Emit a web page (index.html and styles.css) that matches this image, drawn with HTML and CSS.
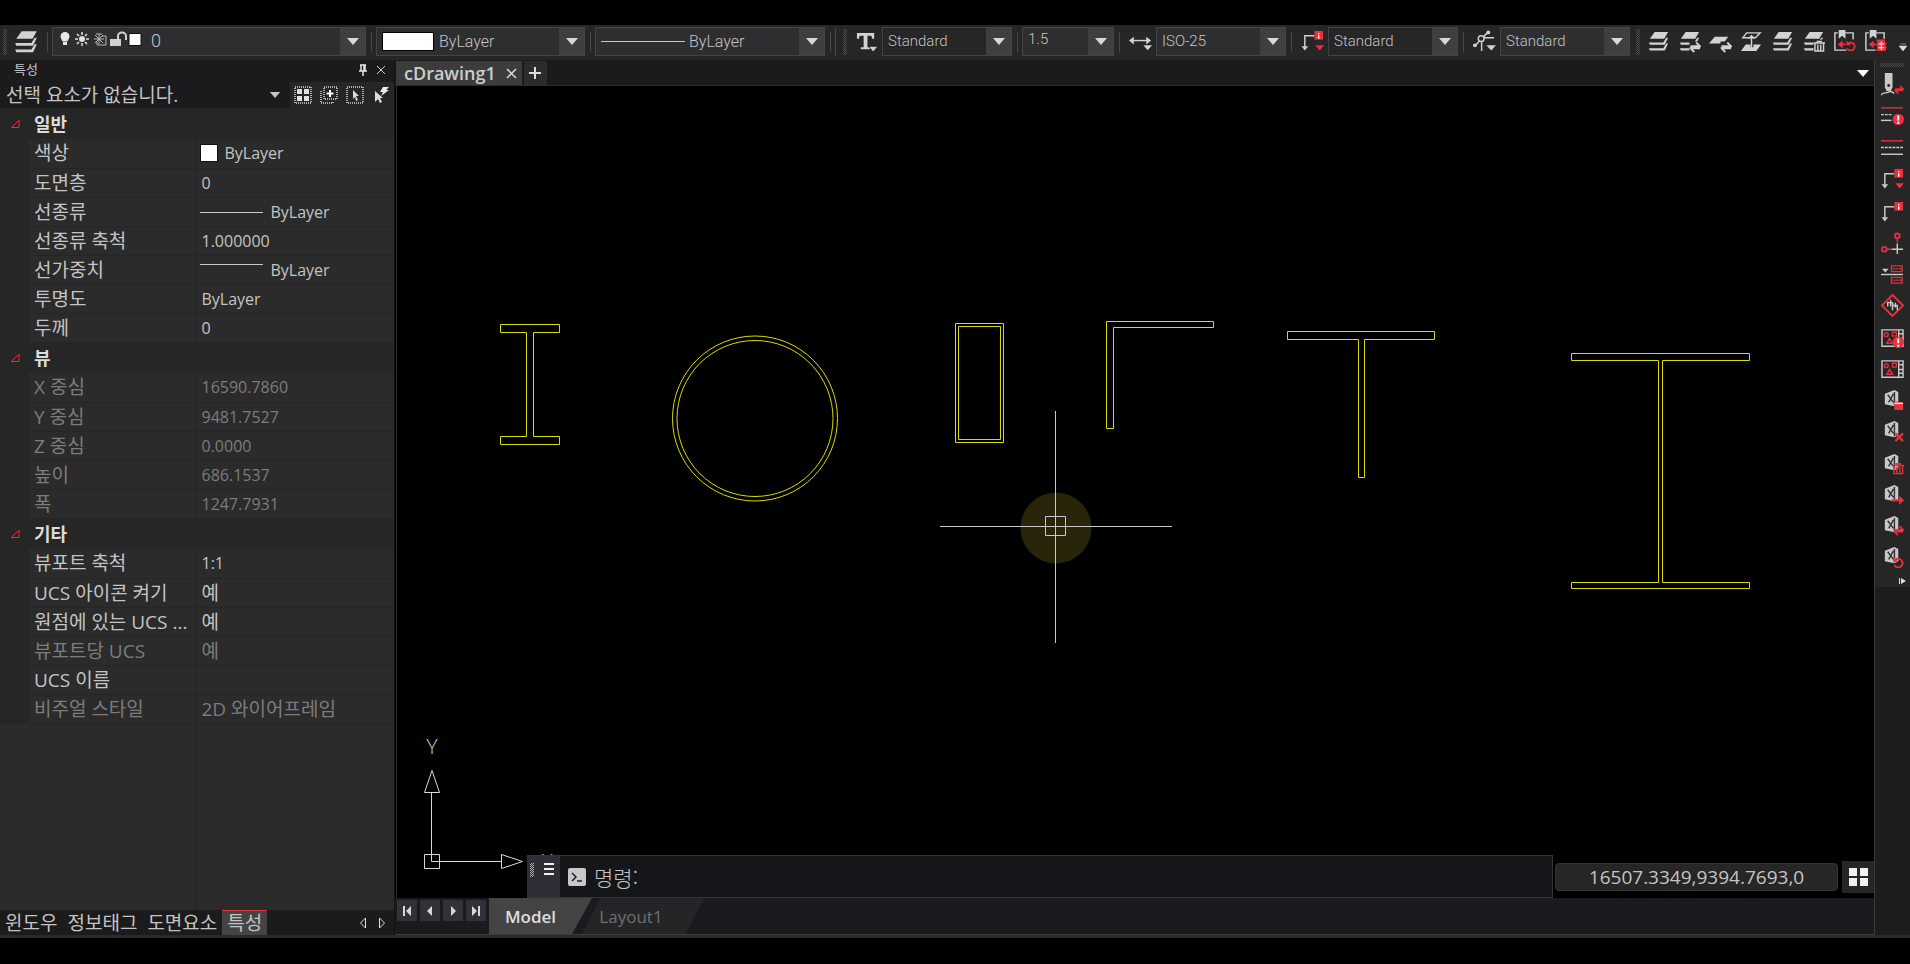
FILE: index.html
```
<!DOCTYPE html>
<html lang="ko">
<head>
<meta charset="UTF-8" />
<meta name="viewport" content="width=device-width, initial-scale=1" />
<title>cDrawing1</title>
<link rel="stylesheet" href="styles.css">
</head>
<body>

<!-- shared icons -->
<svg class="defs" aria-hidden="true">
  <symbol id="layers" viewBox="0 0 24 24">
    <path d="M8 2h14l-4 7H3zM2 13h15l3-5h2l-3.500 7.500H3zM2 19h15l3-5h2l-3.500 7.500H3z" fill="currentColor"/>
  </symbol>
  <symbol id="swap" viewBox="0 0 12 12">
    <path d="M1 5h10L7 1M11 7H1l4 4" fill="none" stroke="currentColor" stroke-width="2"/>
  </symbol>
  <symbol id="trash" viewBox="0 0 12 12">
    <path d="M0 2.5h12M4 2V.7h4V2M1.5 3v8h9V3M4.5 4v6M7.5 4v6" fill="none" stroke="currentColor" stroke-width="1.5"/>
  </symbol>
  <symbol id="undo" viewBox="0 0 12 12">
    <path d="M3 3.5A4.5 4.5 0 1 1 2 9" fill="none" stroke="currentColor" stroke-width="2"/>
    <path d="M1 5.5V0l5 5.5z" fill="currentColor"/>
  </symbol>
  <symbol id="alert" viewBox="0 0 12 12">
    <circle cx="6" cy="6" r="6" class="red-fill"/>
    <path d="M6 2v5M6 8.5v2" stroke="#fff" stroke-width="2"/>
  </symbol>
  <symbol id="leader" viewBox="0 0 24 24">
    <path d="M4 18V6h10" fill="none" stroke="currentColor" stroke-width="1.5"/>
    <path d="M.5 17h7L4 21.5z" fill="currentColor"/>
    <path d="M14 1h9v9h-9z" class="red-fill"/>
    <path d="M18.5 3v1.5M18.5 5.5V9" stroke="#fff" stroke-width="1.5"/>
  </symbol>
  <symbol id="block" viewBox="0 0 24 24">
    <path d="M4 5l10-4 4 2v13l-4 2-10-2z" fill="currentColor"/>
    <path d="M7 6l6 8M13 5l-5 9M14 3v14" fill="none" stroke="#333" stroke-width="1.5"/>
  </symbol>
  <symbol id="shapes" viewBox="0 0 24 24">
    <path d="M1 3h22v17H1zM18.5 3v17M19 7h4M19 12h4M19 16h4" fill="none" stroke="currentColor" stroke-width="1.5"/>
    <path d="M12 5.5h4v4h-4zM9 12l3 5H6z" fill="none" class="red-line" stroke-width="1.5"/>
    <circle cx="5.5" cy="8" r="2" fill="none" class="red-line" stroke-width="1.5"/>
  </symbol>
  <symbol id="down" viewBox="0 0 12 7">
    <path d="M0 0h12L6 7z" fill="currentColor"/>
  </symbol>
</svg>

<div class="app">

  <header class="toolbar">
    <span class="grip"></span>
    <button class="tool" title="도면층"><svg class="icon-lg"><use href="#layers"/></svg></button>
    <span class="sep"></span>
    <div class="combo w-layer">
      <select class="pad-layer" aria-label="도면층"><option>0</option></select>
      <svg class="deco" width="84" height="20" viewBox="0 0 84 20">
        <path d="M6 1a4.5 4.5 0 0 1 4.5 4.5c0 2-1.5 3-2 5h-5c-.5-2-2-3-2-5A4.5 4.5 0 0 1 6 1zM4 11h4v3H4z" fill="#e6e6e6"/>
        <circle cx="23" cy="8" r="3" fill="#e0e0e0"/>
        <path d="M23 1v3M23 12v3M16 8h3M27 8h3M18 3l2 2M28 3l-2 2M18 13l2-2M28 13l-2-2" stroke="#e0e0e0" stroke-width="1.5"/>
        <path d="M35 8h10M40 3v10M36 4l8 8M44 4l-8 8M37 3h6M43 5h4v9h-9v-3" fill="none" stroke="#b8b8b8"/>
        <path d="M51 8h11v7H51z" fill="#d0d0d0"/>
        <path d="M59 8V5a4 3.5 0 0 1 8 0v4" fill="none" stroke="#d0d0d0" stroke-width="2"/>
        <path d="M70 2.5h12v12H70z" fill="#fff" stroke="#111"/>
      </svg>
      <span class="drop"><svg><use href="#down"/></svg></span>
    </div>
    <span class="sep"></span>
    <div class="combo w-color">
      <select class="pad-color" aria-label="색상"><option>ByLayer</option></select>
      <span class="deco swatch"></span>
      <span class="drop"><svg><use href="#down"/></svg></span>
    </div>
    <span class="sep"></span>
    <div class="combo w-line">
      <select class="pad-line" aria-label="선종류"><option>ByLayer</option></select>
      <span class="deco rule"></span>
      <span class="drop"><svg><use href="#down"/></svg></span>
    </div>
    <span class="sep"></span>
    <span class="sep tight"></span>
    <span class="grip"></span>
    <button class="tool" title="문자 스타일"><svg class="icon" viewBox="0 0 24 24">
      <path d="M2 3h18v6h-2l-1-3h-4v12h3v2H6v-2h3V6H5L4 9H2z" fill="currentColor"/>
      <path d="M14 17h10l-5 6z" fill="currentColor" stroke="#262626"/>
    </svg></button>
    <div class="combo w-style">
      <select class="dark" aria-label="문자 스타일"><option>Standard</option></select>
      <span class="drop"><svg><use href="#down"/></svg></span>
    </div>
    <span class="sep"></span>
    <div class="combo w-size">
      <select class="high" aria-label="문자 높이"><option>1.5</option></select>
      <span class="drop"><svg><use href="#down"/></svg></span>
    </div>
    <span class="sep"></span>
    <button class="tool" title="치수 스타일"><svg class="icon" viewBox="0 0 24 24">
      <path d="M3 11h18" stroke="currentColor" stroke-width="1.5"/>
      <path d="M0 11l5-4v8zM23 11l-5-4v8zM15 16h9l-4.500 5z" fill="currentColor"/>
    </svg></button>
    <div class="combo w-style">
      <select aria-label="치수 스타일"><option>ISO-25</option></select>
      <span class="drop"><svg><use href="#down"/></svg></span>
    </div>
    <span class="sep"></span>
    <button class="tool" title="다중 지시선 스타일"><svg class="icon" viewBox="0 0 24 24">
      <use href="#leader"/><path d="M15 16h9l-4.500 5.500z" class="red-fill"/>
    </svg></button>
    <div class="combo w-style">
      <select class="dark" aria-label="다중 지시선 스타일"><option>Standard</option></select>
      <span class="drop"><svg><use href="#down"/></svg></span>
    </div>
    <span class="sep"></span>
    <button class="tool" title="점 스타일"><svg class="icon" viewBox="0 0 24 24">
      <path d="M2 17l6-7 7-7M9 9v13M11 8h11" fill="none" stroke="currentColor" stroke-width="1.5"/>
      <circle cx="8.5" cy="9" r="3" fill="#262626" stroke="currentColor" stroke-width="1.5"/>
      <circle cx="16" cy="2.5" r="2" fill="currentColor"/><circle cx="2" cy="16" r="2" fill="currentColor"/>
      <path d="M14 16h10l-5 5.500z" fill="currentColor"/>
    </svg></button>
    <div class="combo w-style">
      <select aria-label="점 스타일"><option>Standard</option></select>
      <span class="drop"><svg><use href="#down"/></svg></span>
    </div>
    <div class="layer-tools">
      <span class="grip"></span>
      <button class="tool" title="도면층 특성"><svg class="icon"><use href="#layers"/></svg></button>
      <button class="tool" title="도면층 전환"><svg class="icon" viewBox="0 0 24 24"><use href="#layers" width="24" height="24"/><path d="M12 12h12v12H12z" fill="#262626"/><use href="#swap" x="12" y="12" width="12" height="12"/></svg></button>
      <button class="tool" title="현재로 변경"><svg class="icon" viewBox="0 0 24 24"><path d="M6 7h14l-5 7H0z" fill="currentColor"/><path d="M12 12h12v12H12z" fill="#262626"/><use href="#swap" x="12" y="12" width="12" height="12"/></svg></button>
      <button class="tool" title="도면층 이동"><svg class="icon" viewBox="0 0 24 24"><path d="M7 3h14l-5 5H3zM12 6v13M9 9l3-3 3 3" fill="none" stroke="currentColor" stroke-width="1.5"/><path d="M6 15h5v3h3v-3h8l-5 7H1z" fill="currentColor"/></svg></button>
      <button class="tool" title="도면층 일치"><svg class="icon"><use href="#layers"/></svg></button>
      <button class="tool" title="도면층 삭제"><svg class="icon" viewBox="0 0 24 24"><use href="#layers" width="24" height="24"/><path d="M12 10h12v14H12z" fill="#262626"/><use href="#trash" x="12" y="11" width="12" height="12"/></svg></button>
      <button class="tool" title="도면층 복원"><svg class="icon" viewBox="0 0 24 24">
        <path d="M5 3H2v18h12M13 3h8v7" fill="none" stroke="currentColor" stroke-width="1.5"/><path d="M6 0h7v9l-3.500-3L6 9z" fill="currentColor"/>
        <path d="M5 15l5-4v3h3v2h-3v3z" class="red-fill"/><use href="#undo" class="red" x="13" y="11" width="11" height="11"/></svg></button>
      <button class="tool" title="도면층 상태"><svg class="icon" viewBox="0 0 24 24">
        <path d="M5 3H2v18h10M13 3h8v6" fill="none" stroke="currentColor" stroke-width="1.5"/><path d="M6 0h7v9l-3.500-3L6 9z" fill="currentColor"/>
        <path d="M5 15l5-4v3h3v2h-3v3zM13 10h9v3l2 1-2 2 2 2-2 4h-9l1-4-1-2 1-2z" class="red-fill"/><path d="M18 12v9M15 14.500h6M15 18.500h6" stroke="#fff"/></svg></button>
    </div>
    <button class="overflow" title="더 보기"><svg width="8" height="9" viewBox="0 0 8 9"><path d="M1 1h6M0 3h8L4 8z" fill="#ddd" stroke="#ddd" stroke-width=".5"/></svg></button>
  </header>

  <div class="main">

    <aside class="panel">
      <div class="panel-title">
        <h2>특성</h2>
        <button title="고정"><svg width="10" height="12" viewBox="0 0 10 12"><path d="M2 1h6M3 1v6M7 1v6M6 1v6M1 7h8M5 7v5" fill="none" stroke="#e8e8e8" stroke-width="1.5"/></svg></button>
        <button title="닫기"><svg width="10" height="10" viewBox="0 0 10 10"><path d="M1 1l8 8M9 1L1 9" stroke="#ccc"/></svg></button>
      </div>
      <div class="selection">
        <div class="pick">
          <select aria-label="선택 요소"><option>선택 요소가 없습니다.</option></select>
          <svg class="pick-arrow"><use href="#down"/></svg>
        </div>
        <button title="모두 선택"><svg width="18" height="18" viewBox="0 0 18 18"><path d="M1 1h16v16H1z" fill="none" stroke="#d8d8d8" stroke-width="1.5" stroke-dasharray="1 1"/><path d="M3 3h5v5H3zM10 3h5v5h-5zM3 10h5v5H3zM10 10h5v5h-5z" fill="#e0e0e0"/></svg></button>
        <button title="선택 추가"><svg width="18" height="18" viewBox="0 0 18 18"><path d="M1 5v12h12v-2M4 1h13v12H4z" fill="none" stroke="#d8d8d8" stroke-width="1.5" stroke-dasharray="1 1"/><path d="M10 4v7M6.500 7.500h7" stroke="#fff" stroke-width="2"/></svg></button>
        <button title="객체 선택"><svg width="18" height="18" viewBox="0 0 18 18"><path d="M1 1h16v16H1z" fill="none" stroke="#d8d8d8" stroke-width="1.5" stroke-dasharray="1 1"/><path d="M7 4l6 6h-3l2 4-2 1-1-4-2 2z" fill="#ddd"/></svg></button>
        <button title="빠른 선택"><svg width="18" height="18" viewBox="0 0 18 18"><path d="M3 5l8 7H8l2 4-2 1-2-4-3 3z" fill="#ddd"/><path d="M11 1h6l-3 3h3l-8 6 2-4H8z" fill="#eee"/></svg></button>
      </div>

      <table class="props">
        <colgroup><col class="c-gutter"><col class="c-name"><col></colgroup>
        <tbody>
          <tr class="group"><td><svg class="mark" viewBox="0 0 10 10"><path d="M1.500 8.500h7.500V1z"/></svg></td><th colspan="2">일반</th></tr>
          <tr><td></td><th>색상</th><td><span class="chip"></span>ByLayer</td></tr>
          <tr><td></td><th>도면층</th><td>0</td></tr>
          <tr><td></td><th>선종류</th><td><span class="dash"></span>ByLayer</td></tr>
          <tr><td></td><th>선종류 축척</th><td>1.000000</td></tr>
          <tr><td></td><th>선가중치</th><td><span class="dash up"></span>ByLayer</td></tr>
          <tr><td></td><th>투명도</th><td>ByLayer</td></tr>
          <tr><td></td><th>두께</th><td>0</td></tr>
        </tbody>
        <tbody>
          <tr class="group"><td><svg class="mark" viewBox="0 0 10 10"><path d="M1.500 8.500h7.500V1z"/></svg></td><th colspan="2">뷰</th></tr>
          <tr class="off"><td></td><th>X 중심</th><td>16590.7860</td></tr>
          <tr class="off"><td></td><th>Y 중심</th><td>9481.7527</td></tr>
          <tr class="off"><td></td><th>Z 중심</th><td>0.0000</td></tr>
          <tr class="off"><td></td><th>높이</th><td>686.1537</td></tr>
          <tr class="off"><td></td><th>폭</th><td>1247.7931</td></tr>
        </tbody>
        <tbody>
          <tr class="group"><td><svg class="mark" viewBox="0 0 10 10"><path d="M1.500 8.500h7.500V1z"/></svg></td><th colspan="2">기타</th></tr>
          <tr><td></td><th>뷰포트 축척</th><td>1:1</td></tr>
          <tr><td></td><th>UCS 아이콘 켜기</th><td class="ko">예</td></tr>
          <tr><td></td><th>원점에 있는 UCS ...</th><td class="ko">예</td></tr>
          <tr class="off"><td></td><th>뷰포트당 UCS</th><td class="ko">예</td></tr>
          <tr><td></td><th>UCS 이름</th><td></td></tr>
          <tr class="off"><td></td><th>비주얼 스타일</th><td class="ko">2D 와이어프레임</td></tr>
        </tbody>
      </table>
      <div class="props-rest"></div>

      <nav class="panel-tabs">
        <button>윈도우</button>
        <button>정보태그</button>
        <button>도면요소</button>
        <button class="active">특성</button>
        <span class="spacer"></span>
        <button class="step" title="이전"><svg width="8" height="12" viewBox="0 0 8 12"><path d="M6.500 1v10L1.500 6z" fill="none" stroke="#ddd"/></svg></button>
        <button class="step" title="다음"><svg width="8" height="12" viewBox="0 0 8 12"><path d="M1.500 1v10l5-5z" fill="none" stroke="#ddd"/></svg></button>
      </nav>
    </aside>

    <section class="work">
      <div class="file-tabs">
        <div class="file-tab">
          <a href="#drawing">cDrawing1</a>
          <button title="닫기"><svg width="11" height="11" viewBox="0 0 11 11"><path d="M1 1l9 9M10 1l-9 9" stroke="#ddd" stroke-width="1.5"/></svg></button>
        </div>
        <button class="new-tab" title="새 도면"><svg width="12" height="12" viewBox="0 0 12 12"><path d="M6 0v12M0 6h12" stroke="#ddd" stroke-width="2"/></svg></button>
        <span class="spacer"></span>
        <button class="tab-list" title="도면 목록"><svg width="12" height="7"><use href="#down"/></svg></button>
      </div>

      <div class="canvas" id="drawing">
        <svg class="sheet" viewBox="397 86 1477 812" preserveAspectRatio="xMinYMin meet">
          <circle cx="1056" cy="528" r="35.500" fill="#28250a"/>
          <g class="shape">
            <path d="M500.500 324.500h59v8h-26v104h26v8h-59v-8h26v-104h-26z"/>
            <circle cx="755" cy="418.500" r="82.500"/>
            <circle cx="755" cy="418.500" r="78"/>
            <path d="M955.500 323.500h48v119h-48zM958.500 326.500h42v113h-42z"/>
            <path d="M1106.500 321.500h107v6h-100v101h-7z"/>
            <path d="M1287.500 331.500h147v8h-70v138h-6v-138h-71z"/>
            <path d="M1571.500 353.500h178v7h-87v222h87v6h-178v-6h87v-222h-87z"/>
          </g>
          <g class="cross">
            <path d="M940 526.500h232M1055.500 411v232"/>
            <path d="M1045.500 516.500h20v19h-20z"/>
          </g>
          <g class="ucs">
            <path d="M424.500 854.500h15v14h-15zM431.500 861.500v-69M431.500 861.500h70"/>
            <path d="M424.500 792.500h15l-7.500-22zM501.500 854.500v14l21-7z"/>
            <text x="432" y="754">Y</text>
            <text x="547" y="869">X</text>
          </g>
        </svg>

        <div class="command-row">
          <div class="command">
            <div class="command-grip">
              <span class="grip"></span>
              <svg width="10" height="12" viewBox="0 0 10 12"><path d="M0 1h10M0 6h10M0 11h10" stroke="#f0f0f0" stroke-width="2"/></svg>
            </div>
            <svg class="prompt" width="18" height="18" viewBox="0 0 18 18"><rect width="18" height="18" rx="2" fill="#c8c8c8"/><path d="M4 5l4 4-4 4M9 13h5" fill="none" stroke="#222" stroke-width="1.5"/></svg>
            <label for="cmd">명령:</label>
            <input id="cmd" type="text" autocomplete="off">
          </div>
          <output class="coords">16507.3349,9394.7693,0</output>
          <button class="grid-btn" title="보기"><svg width="19" height="18" viewBox="0 0 19 18"><path d="M0 0h8v8H0zM11 0h8v8h-8zM0 10h8v8H0zM11 10h8v8h-8z" fill="#f0f0f0"/></svg></button>
        </div>
      </div>

      <div class="sheets">
        <div class="sheet-nav">
          <button title="처음"><svg width="10" height="10" viewBox="0 0 10 10"><path d="M1 0h2v10H1zM9 0v10L4 5z"/></svg></button>
          <button title="이전"><svg width="10" height="10" viewBox="0 0 10 10"><path d="M7 0v10L2 5z"/></svg></button>
          <button title="다음"><svg width="10" height="10" viewBox="0 0 10 10"><path d="M3 0v10l5-5z"/></svg></button>
          <button title="마지막"><svg width="10" height="10" viewBox="0 0 10 10"><path d="M1 0v10l5-5zM7 0h2v10H7z"/></svg></button>
        </div>
        <button class="sheet-tab active">Model</button>
        <button class="sheet-tab">Layout1</button>
      </div>
    </section>

    <div class="side">
      <div class="side-tools">
        <span class="grip-h"></span>
        <div class="side-group first">
          <button title="펜"><svg class="icon" viewBox="0 0 24 24"><path d="M4 0h8v15l-2 4H6l-2-4z" fill="currentColor"/><circle cx="8" cy="13" r="1.500" fill="#222"/><path d="M0 23c3-4 4-1 8-3s4 1 6 1" fill="none" stroke="currentColor" stroke-width="1.5"/><use href="#swap" class="red" x="14" y="12" width="10" height="11"/></svg></button>
          <button title="선종류 경고"><svg class="icon" viewBox="0 0 24 24"><path d="M0 2h23" class="red-line" stroke-width="1.5"/><path d="M0 9h12" stroke="currentColor" stroke-width="1.5" stroke-dasharray="3 1"/><path d="M0 15h11" stroke="currentColor" stroke-width="1.5"/><use href="#alert" x="12" y="8" width="12" height="12"/></svg></button>
          <button title="선종류"><svg class="icon" viewBox="0 0 24 24"><path d="M0 4h23" class="red-line" stroke-width="1.5"/><path d="M0 11h23" stroke="currentColor" stroke-width="1.5" stroke-dasharray="3 1"/><path d="M0 18h23" stroke="currentColor" stroke-width="1.5"/></svg></button>
          <button title="지시선 스타일"><svg class="icon" viewBox="0 0 24 24"><use href="#leader"/><path d="M15 16h9l-4.500 5.500z" class="red-fill"/></svg></button>
        </div>
        <div class="side-group">
          <button title="지시선"><svg class="icon"><use href="#leader"/></svg></button>
          <button title="점 맞춤"><svg class="icon" viewBox="0 0 24 24"><path d="M17 12v11M11 18h12" stroke="currentColor" stroke-width="1.5"/><circle cx="17" cy="4" r="2.500" fill="none" class="red-line" stroke-width="2"/><circle cx="3.500" cy="18" r="2.500" fill="none" class="red-line" stroke-width="2"/><path d="M17 6v5M6 18h5" class="red-line" stroke-width="1.5"/></svg></button>
          <button title="행 맞춤"><svg class="icon" viewBox="0 0 24 24"><path d="M0 12h23" stroke="currentColor" stroke-width="1.5"/><path d="M1 6h7l-3.500 4z" fill="currentColor"/><path d="M11 3h11v6H11zM11 15h11v6H11z" fill="none" class="red-line" stroke-width="1.5"/><path d="M13 6h8M13 18h8" class="red-line" stroke-width="1.5" stroke-dasharray="2 1"/></svg></button>
          <button title="해치"><svg class="icon" viewBox="0 0 24 24"><path d="M12 1l11 11-11 11L1 12z" fill="none" class="red-line" stroke-width="2"/><path d="M7 13V9h5v8M12 12h5v5M10 6v7M15 9v5" fill="none" stroke="currentColor" stroke-width="1.5"/></svg></button>
        </div>
        <div class="side-group">
          <button title="블록 경고"><svg class="icon" viewBox="0 0 24 24"><use href="#shapes"/><use href="#alert" x="12" y="10" width="12" height="12"/></svg></button>
          <button title="블록 목록"><svg class="icon"><use href="#shapes"/></svg></button>
          <button title="블록 열기"><svg class="icon" viewBox="0 0 24 24"><use href="#block"/><path d="M14 13h4l1 1h4v8h-9z" class="red-fill"/><path d="M14 15h9" stroke="#fff" stroke-width="1.5"/></svg></button>
          <button title="블록 제거"><svg class="icon" viewBox="0 0 24 24"><use href="#block"/><path d="M15 14l8 8M23 14l-8 8" class="red-line" stroke-width="2.500"/></svg></button>
        </div>
        <div class="side-group">
          <button title="블록 삭제"><svg class="icon" viewBox="0 0 24 24"><use href="#block"/><use href="#trash" class="red" x="12" y="10" width="12" height="13"/></svg></button>
          <button title="블록 이동"><svg class="icon" viewBox="0 0 24 24"><use href="#block"/><path d="M11 16h8v-4l5 5-5 5v-4h-8z" class="red-fill"/></svg></button>
          <button title="블록 교체"><svg class="icon" viewBox="0 0 24 24"><use href="#block"/><use href="#swap" class="red" x="13" y="11" width="11" height="11"/></svg></button>
          <button title="블록 복원"><svg class="icon" viewBox="0 0 24 24"><use href="#block"/><use href="#undo" class="red" x="12" y="11" width="12" height="12"/></svg></button>
        </div>
        <button class="side-more" title="더 보기"><svg width="7" height="6" viewBox="0 0 7 6"><path d="M0 0h1v6H0zM2 0v6l5-3z" fill="#ddd"/></svg></button>
      </div>
    </div>

  </div>
  <footer class="bottom-edge"></footer>
</div>

</body>
</html>
```
FILE: styles.css
```
* {
  box-sizing: border-box;
}
body {
  margin: 0;
  background: #000;
  color: #c4c4c4;
  font-family: "Open Sans", "Noto Sans CJK KR", sans-serif;
  font-size: 16px;
}
button, select, input {
  font: inherit;
  color: inherit;
  background: none;
  border: none;
  padding: 0;
  margin: 0;
}
button {
  display: flex;
  align-items: center;
  justify-content: center;
}
select {
  appearance: none;
}
svg {
  display: block;
}
.defs {
  position: absolute;
  width: 0;
  height: 0;
}
.red {
  color: #e8303c;
}
.red-fill {
  fill: #ee2f3d;
}
.red-line {
  stroke: #e0303c;
}
.spacer {
  flex: 1;
}
.app {
  display: flex;
  flex-direction: column;
  height: 100vh;
  padding: 25px 0 26px;
}

/* top toolbar */
.toolbar {
  display: flex;
  align-items: center;
  height: 35px;
  padding: 2px 2px 4px 3px;
  background: #262626;
  font-family: Roboto, sans-serif;
  font-weight: 300;
  font-size: 15px;
  white-space: nowrap;
}
.grip {
  flex: none;
  width: 4px;
  height: 26px;
  background: repeating-conic-gradient(#4a4a4a 0 25%, #262626 0 50%) 0 0 / 2px 2px;
}
.toolbar .grip {
  margin-right: 3px;
}
.sep {
  flex: none;
  width: 1px;
  height: 20px;
  margin: 0 4px 0 5px;
  background: #484848;
}
.sep.tight {
  height: 28px;
  margin: 0 7px 0 0;
}
.tool {
  flex: none;
  width: 32px;
  height: 28px;
  color: #d2d2d2;
}
.icon {
  width: 23px;
  height: 23px;
}
.icon-lg {
  width: 28px;
  height: 26px;
}
.combo {
  display: grid;
  grid-template-columns: auto 1fr 25px;
  align-items: center;
  flex: none;
  height: 29px;
  border: 1px solid #444448;
  background: #2e2e31;
}
.combo select {
  grid-area: 1 / 1 / 2 / 4;
  width: 100%;
  height: 27px;
  padding-left: 5px;
  padding-bottom: 2px;
}
.combo select.high {
  padding-bottom: 6px;
}
.combo select.dark {
  background: #262626;
}
.combo .deco {
  grid-area: 1 / 1;
  pointer-events: none;
}
.combo .drop {
  grid-area: 1 / 3;
  display: flex;
  align-items: center;
  justify-content: center;
  height: 27px;
  background: #3f3f42;
  pointer-events: none;
}
.drop svg {
  width: 12px;
  height: 7px;
  color: #d8d8d8;
}
.w-layer { width: 314px; }
.w-color { width: 209px; }
.w-line { width: 230px; }
.w-style { width: 130px; }
.w-size { width: 92px; }
.combo .pad-layer {
  padding-left: 98px;
  font-size: 18px;
}
.combo .pad-color {
  padding-left: 62px;
  padding-bottom: 0;
  font-size: 16px;
}
.combo .pad-line {
  padding-left: 93px;
  padding-bottom: 0;
  font-size: 16px;
}
.w-layer .deco {
  margin: 0 0 2px 6px;
}
.swatch {
  width: 52px;
  height: 19px;
  margin-left: 5px;
  border: 1px solid #000;
  background: #fff;
}
.rule {
  width: 84px;
  height: 1px;
  margin-left: 5px;
  background: #c8c8c8;
}
.layer-tools {
  display: flex;
  align-items: center;
  flex: none;
  margin-left: 6px;
}
.layer-tools .tool {
  width: 31px;
}
.overflow {
  width: 10px;
  height: 20px;
  margin-left: auto;
  align-items: flex-end;
}

.main {
  display: flex;
  flex: 1;
  min-height: 0;
}
.bottom-edge {
  height: 3px;
  background: #2a2a2a;
}

/* properties panel */
.panel {
  display: flex;
  flex-direction: column;
  flex: none;
  width: 394px;
  background: #262626;
}
.panel-title {
  display: flex;
  align-items: center;
  gap: 7px;
  height: 22px;
  padding: 0 8px 3px 14px;
  background: #1b1b1b;
}
.panel-title h2 {
  flex: 1;
  margin: 0;
  font-size: 13px;
  font-weight: normal;
  line-height: 19px;
}
.panel-title button {
  width: 11px;
}
.selection {
  display: flex;
  align-items: center;
  height: 26px;
}
.selection button {
  width: 26px;
  height: 26px;
}
.pick {
  display: grid;
  flex: 1;
  align-items: center;
  justify-items: end;
  background: #1b1b1d;
}
.pick select {
  grid-area: 1 / 1;
  width: 100%;
  height: 26px;
  padding-left: 6px;
  font-size: 19px;
  line-height: 26px;
}
.pick-arrow {
  grid-area: 1 / 1;
  width: 12px;
  height: 6px;
  margin-right: 9px;
  pointer-events: none;
}
.props {
  width: 100%;
  border-collapse: collapse;
  table-layout: fixed;
}
.c-gutter { width: 29px; }
.c-name { width: 167px; }
.props th, .props td {
  height: 29px;
  padding: 0;
  line-height: 26px;
  text-align: left;
  white-space: nowrap;
  overflow: hidden;
}
.props th {
  padding-left: 5px;
  font-size: 19px;
  font-weight: normal;
  background: #2b2b2b;
  border-bottom: 1px solid #252525;
}
.props th + td {
  padding-left: 5px;
  background: #2b2b2b;
  border-left: 1px solid #252525;
  border-bottom: 1px solid #252525;
}
.props .group th {
  height: 31px;
  font-weight: bold;
  font-size: 18px;
  color: #dcdcdc;
  background: #262626;
  border: none;
}
.props .off th, .props .off td {
  color: #7c7c7c;
}
.props td.ko {
  font-size: 19px;
}
.mark {
  width: 10px;
  height: 10px;
  margin-left: 10px;
}
.mark path {
  fill: none;
  stroke: #e0303c;
}
.chip {
  display: inline-block;
  width: 18px;
  height: 18px;
  margin: 0 7px 3px -2px;
  border: 1px solid #111;
  background: #fff;
  vertical-align: middle;
}
.dash {
  display: inline-block;
  width: 63px;
  height: 1px;
  margin: 0 8px 2px -2px;
  background: #c8c8c8;
  vertical-align: middle;
}
.dash.up {
  margin-bottom: 14px;
}
.props-rest {
  flex: 1;
  background: linear-gradient(#252525, #252525) 196px 0 / 1px 100% no-repeat #2b2b2b;
}
.panel-tabs {
  display: flex;
  height: 25px;
  padding-right: 3px;
  background: #1b1b1b;
  font-size: 19px;
  line-height: 24px;
}
.panel-tabs button {
  padding: 0 5px;
}
.panel-tabs .active {
  border-top: 1px solid #e0303c;
  background: #444;
}
.panel-tabs .step {
  width: 19px;
}

/* drawing area */
.work {
  display: flex;
  flex-direction: column;
  flex: 1;
  min-width: 0;
  border-left: 1px solid #111;
  border-right: 1px solid #3c3c3c;
}
.file-tabs {
  display: flex;
  gap: 2px;
  height: 26px;
  padding: 1px 5px 0 1px;
  background: #1b1b1b;
  border-bottom: 1px solid #2c2c2c;
}
.file-tab {
  display: flex;
  align-items: center;
  gap: 10px;
  padding: 0 5px 0 8px;
  background: #3c3c3c;
}
.file-tab a {
  color: #ccc;
  font-size: 18px;
  font-weight: 600;
  line-height: 24px;
  text-decoration: none;
}
.new-tab {
  width: 23px;
  background: #2c2c2c;
}
.tab-list {
  color: #fff;
}
.canvas {
  position: relative;
  flex: 1;
  min-height: 0;
  margin-left: 1px;
  overflow: hidden;
  border-left: 1px solid #2c2c2c;
  background: #000;
}
.sheet {
  width: 100%;
  height: 100%;
}
.shape {
  fill: none;
  stroke: #dcdb00;
}
.cross {
  fill: none;
  stroke: #c8c8c8;
}
.ucs path {
  fill: none;
  stroke: #d8d8d8;
}
.ucs text {
  fill: #b4b4b4;
  font-family: Roboto, sans-serif;
  font-weight: 300;
  font-size: 20px;
  text-anchor: middle;
}
.command-row {
  position: absolute;
  left: 130px;
  right: 0;
  bottom: 0;
  display: flex;
  align-items: center;
}
.command {
  display: flex;
  align-items: center;
  flex: 1;
  height: 43px;
  margin-right: 2px;
  border: 1px solid #333;
  border-left: none;
  background: #15161a;
}
.command-grip {
  display: flex;
  align-items: flex-start;
  gap: 10px;
  width: 33px;
  height: 41px;
  padding: 7px 3px;
  background: #2e2f36;
}
.command-grip .grip {
  height: 14px;
  background: repeating-conic-gradient(#aaa 0 25%, #2e2f36 0 50%) 0 0 / 2px 2px;
}
.prompt {
  margin: 0 8px;
}
.command label {
  font-family: "Noto Sans CJK KR", sans-serif;
  font-size: 21px;
  font-weight: 300;
  line-height: 38px;
}
.command input {
  flex: 1;
  height: 40px;
  padding-left: 8px;
  outline: none;
}
.coords {
  width: 283px;
  height: 28px;
  border: 1px solid #333;
  border-radius: 4px;
  background: #262626;
  font-size: 19px;
  line-height: 27px;
  text-align: center;
}
.grid-btn {
  width: 32px;
  height: 32px;
  margin-left: 4px;
  background: #262626;
}
.sheets {
  display: flex;
  height: 37px;
  background: #1a1b1f;
  border-bottom: 1px solid #3c3c3c;
}
.sheet-nav {
  display: flex;
  gap: 3px;
  padding: 2px 3px 0 2px;
}
.sheet-nav button {
  width: 20px;
  height: 21px;
  background: #303139;
}
.sheet-nav path {
  fill: #d8d8d8;
}
.sheet-tab {
  width: 122px;
  height: 36px;
  padding-right: 24px;
  clip-path: polygon(18px 0, 100% 0, calc(100% - 18px) 100%, 0 100%);
  background: #242527;
  color: #707070;
  font-size: 17px;
}
.sheet-tab.active {
  width: 103px;
  margin-right: -10px;
  padding-right: 20px;
  clip-path: polygon(0 0, 100% 0, calc(100% - 20px) 100%, 0 100%);
  background: #444;
  color: #dedede;
  font-size: 17px;
  font-weight: 600;
}

/* right toolbar */
.side {
  flex: none;
  width: 35px;
  background: #1d1d1d;
}
.side-tools {
  display: flex;
  flex-direction: column;
  height: 527px;
  padding-top: 3px;
  background: #262626;
  color: #c8c8c8;
}
.grip-h {
  width: 24px;
  height: 4px;
  margin: 0 0 1px 5px;
  background: repeating-conic-gradient(#4a4a4a 0 25%, #262626 0 50%) 0 0 / 2px 2px;
}
.side-group {
  padding-bottom: 2px;
}
.side-group button {
  width: 35px;
  height: 31px;
}
.side-group.first button:first-child {
  height: 34px;
}
.side-more {
  height: 14px;
  justify-content: flex-end;
  padding-right: 4px;
}
```
